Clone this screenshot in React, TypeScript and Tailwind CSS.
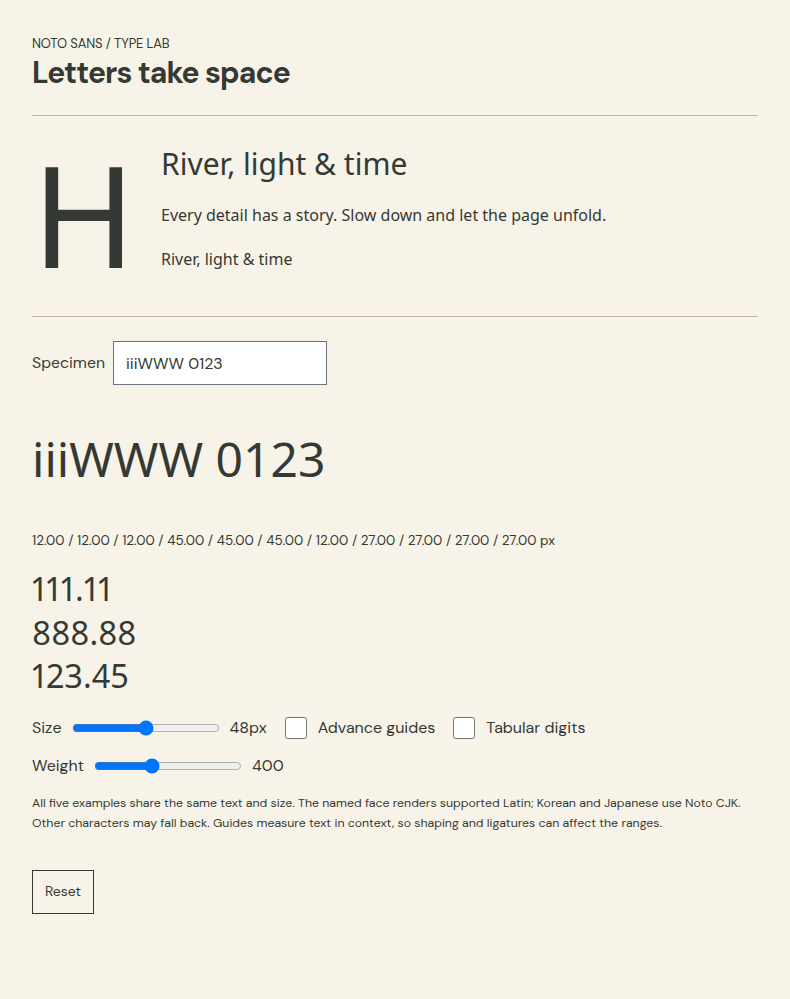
import React, { useState } from "react";

const ui = { fontFamily: '"DM Sans", Inter, "Noto Sans", sans-serif' };
const noto = { fontFamily: '"Noto Sans", sans-serif' };

export default function App() {
  const [text, setText] = useState("iiiWWW 0123");
  const [size, setSize] = useState(48);
  const [weight, setWeight] = useState(400);
  return (
    <div className="min-h-screen bg-[#f8f3e9] text-[#343a33] px-8 pt-[37px] pb-10" style={ui}>
      <div className="text-[13px] leading-[14px] tracking-[-0.01em]">NOTO SANS / TYPE LAB</div>
      <h1 className="mt-[4px] text-[30px] leading-[36px] font-bold tracking-[-0.03em]">Letters take space</h1>
      <div className="mt-[24px] border-t border-[#c2b39f]" />

      <div className="flex items-start pt-[26px] pb-[17px]" style={noto}>
        <div className="w-[129px] shrink-0 text-[140px] leading-[170px] -mt-[13px]">H</div>
        <div className="flex flex-col">
          <div className="text-[30px] leading-[44px]">River, light &amp; time</div>
          <p className="mt-[17px] text-[16px] leading-[24px]">Every detail has a story. Slow down and let the page unfold.</p>
          <p className="mt-[20px] text-[16px] leading-[24px]">River, light &amp; time</p>
        </div>
      </div>
      <div className="border-t border-[#c2b39f]" />

      <div className="mt-[24px] flex items-center gap-2">
        <label className="text-[15.8px]">Specimen</label>
        <input
          value={text}
          onChange={(e) => setText(e.target.value)}
          className="w-[214px] h-[44px] border border-[#6b7480] bg-white px-3 text-[16px] text-[#343a33] outline-none"
          style={ui}
        />
      </div>

      <div className="mt-[42px] text-[48px] leading-[64px]" style={noto}>{text}</div>

      <div className="mt-[41px] text-[13.5px] leading-[18px]">
        12.00 / 12.00 / 12.00 / 45.00 / 45.00 / 45.00 / 12.00 / 27.00 / 27.00 / 27.00 / 27.00 px
      </div>

      <div className="mt-[17px] text-[32.5px] leading-[43.5px] [font-variant-numeric:proportional-nums]" style={noto}>
        <div>111.11</div>
        <div>888.88</div>
        <div>123.45</div>
      </div>

      <div className="mt-[17px] flex items-center gap-2 text-[16px] h-[26px]">
        <span>Size</span>
        <input type="range" min={16} max={80} value={size} onChange={(e) => setSize(+e.target.value)} className="mx-[2px] w-[148px] accent-[#0075ff]" />
        <span>{size}px</span>
        <input type="checkbox" className="ml-[10px] w-[22px] h-[22px] m-0" />
        <span className="ml-[3px]">Advance guides</span>
        <input type="checkbox" className="ml-[10px] w-[22px] h-[22px] m-0" />
        <span className="ml-[3px]">Tabular digits</span>
      </div>
      <div className="mt-[12px] flex items-center gap-2 text-[16px] h-[26px]">
        <span>Weight</span>
        <input type="range" min={100} max={900} step={100} value={weight} onChange={(e) => setWeight(+e.target.value)} className="mx-[2px] w-[148px] accent-[#0075ff]" />
        <span>{weight}</span>
      </div>

      <p className="mt-[14px] text-[12.3px] leading-[20px]">
        All five examples share the same text and size. The named face renders supported Latin; Korean and Japanese use Noto CJK.
        <br />
        Other characters may fall back. Guides measure text in context, so shaping and ligatures can affect the ranges.
      </p>

      <button className="mt-[37px] w-[62px] h-[44px] border border-[#343a33] text-[14px]">Reset</button>
    </div>
  );
}
